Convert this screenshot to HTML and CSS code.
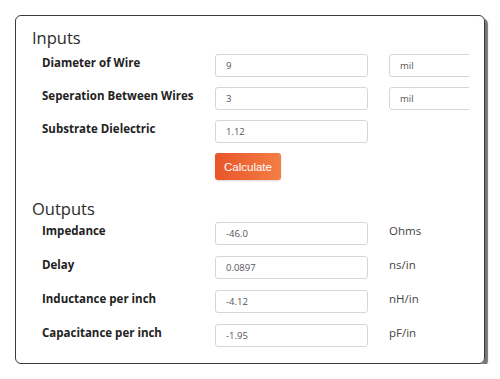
FILE: index.html
```html
<!DOCTYPE html>
<html>
<head>
<meta charset="utf-8">
<link rel="stylesheet" href="styles.css">
</head>
<body>
<div class="card">
  <h2 class="section-title">Inputs</h2>
  <div class="rows">
    <div class="row">
      <span class="label">Diameter of Wire</span>
      <input class="field" value="9">
      <div class="unit-wrap"><input class="unit-field" value="mil"></div>
    </div>
    <div class="row">
      <span class="label">Seperation Between Wires</span>
      <input class="field" value="3">
      <div class="unit-wrap"><input class="unit-field" value="mil"></div>
    </div>
    <div class="row">
      <span class="label">Substrate Dielectric</span>
      <input class="field" value="1.12">
    </div>
    <div class="row">
      <span class="label"></span>
      <button class="btn">Calculate</button>
    </div>
  </div>
  <h2 class="section-title outputs-title">Outputs</h2>
  <div class="rows out-rows">
    <div class="row">
      <span class="label">Impedance</span>
      <input class="field" value="-46.0">
      <span class="unit">Ohms</span>
    </div>
    <div class="row">
      <span class="label">Delay</span>
      <input class="field" value="0.0897">
      <span class="unit">ns/in</span>
    </div>
    <div class="row">
      <span class="label">Inductance per inch</span>
      <input class="field" value="-4.12">
      <span class="unit">nH/in</span>
    </div>
    <div class="row">
      <span class="label">Capacitance per inch</span>
      <input class="field" value="-1.95">
      <span class="unit">pF/in</span>
    </div>
  </div>
</div>
</body>
</html>
```
FILE: styles.css
```css
html, body {
  margin: 0;
  padding: 0;
  background: #fff;
}
body {
  font-family: "Open Sans", "Noto Sans", sans-serif;
  color: #222;
}
.card {
  margin: 15px 0 0 15px;
  width: 470px;
  height: 349px;
  box-sizing: border-box;
  border: 1px solid #3a3a3a;
  border-radius: 6px;
  box-shadow: 3px 3px 1px #767676;
  padding: 10px 0 0 16px;
}
.section-title {
  margin: 0;
  font-size: 16.5px;
  font-weight: 400;
  line-height: 24px;
  color: #2b2b2b;
}
.rows {
  display: flex;
  flex-direction: column;
  gap: 10px;
  padding-left: 10px;
  margin-top: 4px;
}
.row {
  display: grid;
  grid-template-columns: 152px 153px 80px;
  column-gap: 21px;
  align-items: start;
}
.label {
  font-size: 11.5px;
  font-weight: 700;
  line-height: 18px;
  color: #222;
  white-space: nowrap;
}
.field, .unit-field {
  display: block;
  box-sizing: border-box;
  height: 23px;
  border: 1px solid #d6d6d6;
  border-radius: 3px;
  font-family: "Open Sans", sans-serif;
  font-size: 9.5px;
  color: #555;
  padding: 0 0 0 10px;
  outline: none;
  width: 153px;
}
.unit-wrap {
  width: 80px;
  height: 23px;
  overflow: hidden;
}
.unit-field {
  width: 100px;
}
.btn {
  width: 66px;
  height: 27px;
  border: none;
  border-radius: 3px;
  background: linear-gradient(90deg, #e8552a, #f47e45);
  color: #fff;
  font-family: "Liberation Sans", Arial, sans-serif;
  font-size: 11.5px;
  padding: 0;
  box-shadow: 0 1px 2px rgba(0,0,0,0.15);
}
.outputs-title {
  margin-top: 17px;
}
.out-rows {
  gap: 11px;
  margin-top: 1px;
}
.unit {
  font-size: 11.5px;
  color: #444;
  line-height: 18px;
}
```
